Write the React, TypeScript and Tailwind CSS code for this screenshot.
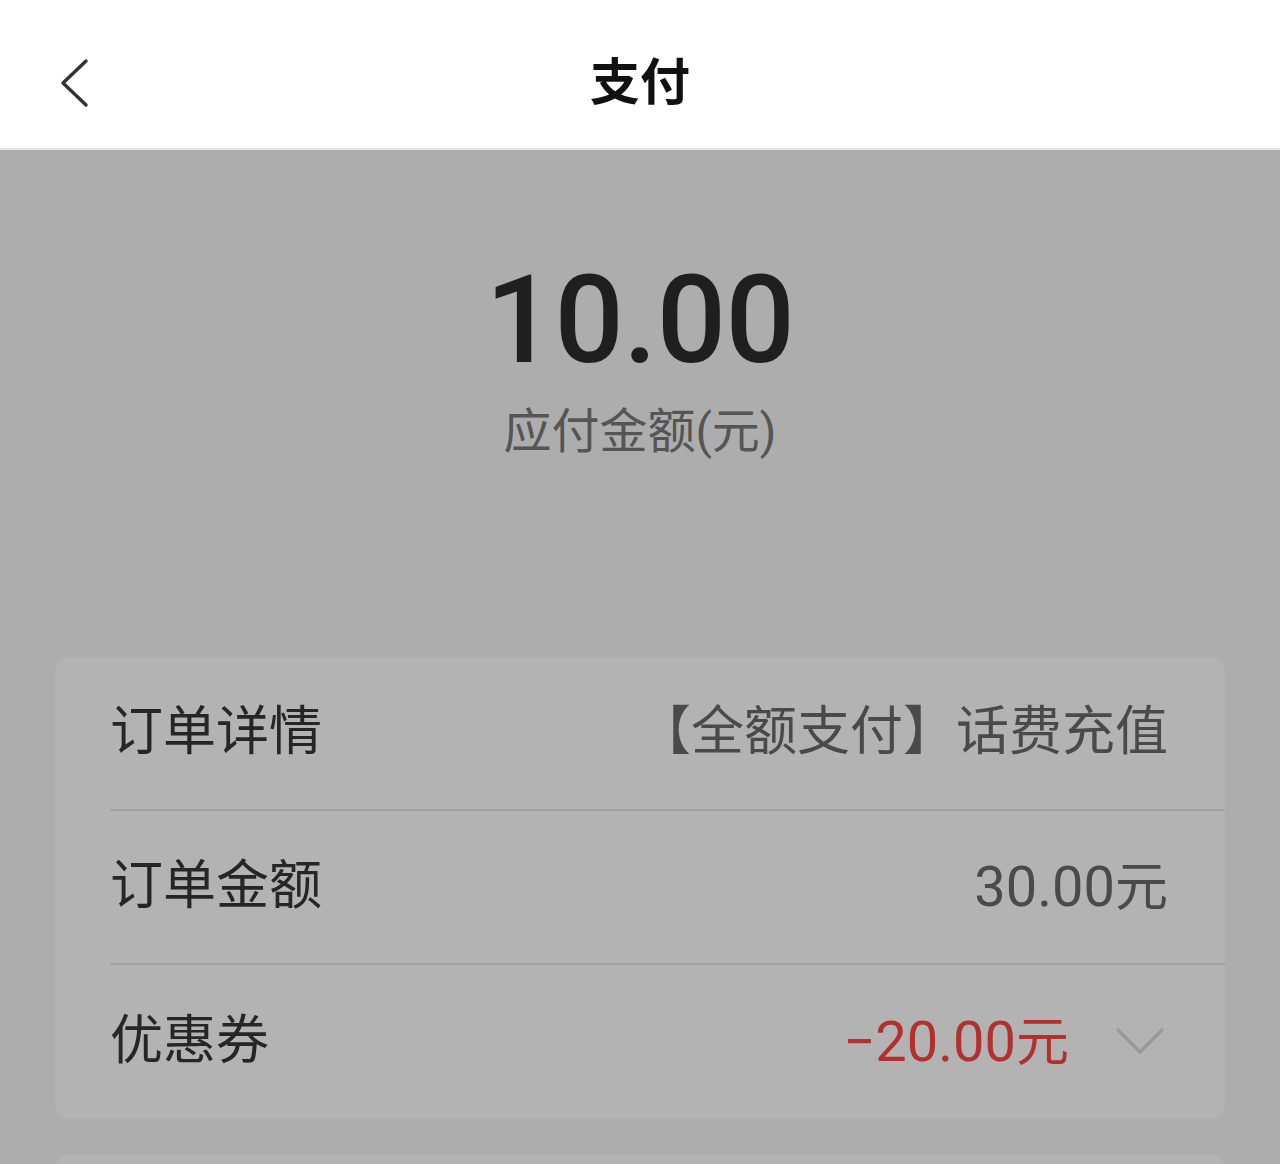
import React from 'react';

const font = { fontFamily: 'Roboto, "Noto Sans CJK SC", sans-serif' };

const Row: React.FC<{ label: string; children: React.ReactNode; last?: boolean }> = ({ label, children, last }) => (
  <div className={`ml-[55px] h-[154px] flex items-center justify-between pr-[57px] ${last ? '' : 'border-b-2 border-[#a2a2a2]'}`}>
    <span className="text-[53px] text-[#262626]">{label}</span>
    {children}
  </div>
);

export default function App() {
  return (
    <div style={font} className="w-[1280px] h-[1164px] overflow-hidden bg-[#adadad]">
      <header className="relative h-[150px] bg-white border-b-2 border-[#e6e6e6] flex items-center justify-center">
        <button className="absolute left-[58px] top-[58px]">
          <svg width="32" height="50" viewBox="0 0 32 50" fill="none">
            <path d="M28 3L5 25l23 22" stroke="#333" strokeWidth="3.4" strokeLinecap="round" strokeLinejoin="round" />
          </svg>
        </button>
        <h1 className="text-[50px] font-bold text-[#111] leading-none mt-[18px]">支付</h1>
      </header>

      <section className="flex flex-col items-center pt-[110px] h-[507px]">
        <div className="text-[122px] font-medium leading-none text-[#1f1f1f] tracking-[-0.5px]">10.00</div>
        <div className="mt-[26px] text-[48px] leading-none text-[#555]">应付金额(元)</div>
      </section>

      <div className="mx-[55px] bg-[#b3b3b3] rounded-[14px]">
        <Row label="订单详情">
          <span className="text-[53px] text-[#4a4a4a]">【全额支付】话费充值</span>
        </Row>
        <Row label="订单金额">
          <span className="text-[53px] text-[#4a4a4a]"><span className="text-[56px]">30.00</span>元</span>
        </Row>
        <Row label="优惠券" last>
          <div className="flex items-center gap-[46px] mr-[3px]">
            <span className="text-[53px] text-[#b33030]"><span className="text-[56px]">−20.00</span>元</span>
            <svg width="50" height="32" viewBox="0 0 50 32" fill="none">
              <path d="M3 4l22 22L47 4" stroke="#999" strokeWidth="3.2" strokeLinecap="round" strokeLinejoin="round" />
            </svg>
          </div>
        </Row>
      </div>

      <div className="mx-[55px] mt-[35px] h-[80px] bg-[#b3b3b3] rounded-[14px]" />
    </div>
  );
}
